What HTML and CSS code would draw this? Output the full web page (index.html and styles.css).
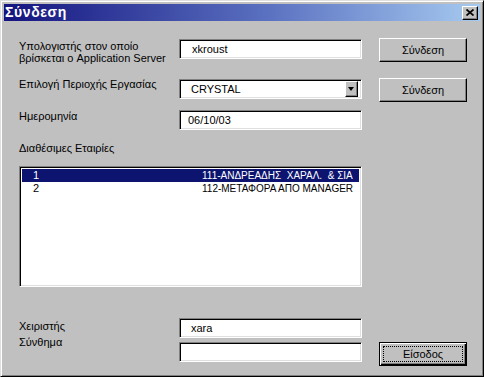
FILE: index.html
```html
<!DOCTYPE html>
<html lang="el">
<head>
    <meta charset="UTF-8">
    <meta name="viewport" content="width=device-width, initial-scale=1.0">
    <link rel="stylesheet" href="styles.css">
    <title>Σύνδεση</title>
</head>
<body>
    <div class="window">
        <div class="titlebar">
            <span class="title">Σύνδεση</span>
            <button class="close-btn">
                <svg width="8" height="7" viewBox="0 0 8 7">
                    <path d="M0.5 0.5 L7.5 6.5 M7.5 0.5 L0.5 6.5" stroke="#000" stroke-width="1.7" fill="none"/>
                </svg>
            </button>
        </div>

        <div class="content">
            <div class="form-row row-server">
                <div class="field-label">Υπολογιστής στον οποίο<br>βρίσκεται ο Application Server</div>
                <div class="textbox">xkroust</div>
                <div></div>
                <button class="btn">Σύνδεση</button>
            </div>

            <div class="form-row row-area">
                <div class="field-label">Επιλογή Περιοχής Εργασίας</div>
                <div class="textbox combo">
                    <span class="combo-text">CRYSTAL</span>
                    <span class="combo-arrow"></span>
                </div>
                <div></div>
                <button class="btn">Σύνδεση</button>
            </div>

            <div class="form-row row-date">
                <div class="field-label">Ημερομηνία</div>
                <div class="textbox date">06/10/03</div>
            </div>

            <div class="list-label">Διαθέσιμες Εταιρίες</div>
            <div class="listbox">
                <div class="list-item selected"><span class="item-num">1</span><span class="item-name">111-ΑΝΔΡΕΑΔΗΣ&nbsp; ΧΑΡΑΛ.&nbsp; &amp; ΣΙΑ</span></div>
                <div class="list-item"><span class="item-num">2</span><span class="item-name">112-ΜΕΤΑΦΟΡΑ ΑΠΟ MANAGER</span></div>
            </div>

            <div class="login">
                <div class="login-labels">
                    <div>Χειριστής</div>
                    <div>Σύνθημα</div>
                </div>
                <div class="login-inputs">
                    <div class="textbox">xara</div>
                    <div class="textbox"></div>
                </div>
                <div class="login-action">
                    <button class="btn default-btn"><span class="focus">Είσοδος</span></button>
                </div>
            </div>
        </div>
    </div>
</body>
</html>
```

FILE: styles.css
```css
body {
    margin: 0;
    padding: 0;
    font-family: "Liberation Sans", Arial, sans-serif;
    font-size: 11px;
    color: #000;
    background-color: #c0c0c0;
}

.window {
    width: 484px;
    height: 377px;
    box-sizing: border-box;
    background-color: #c0c0c0;
    border: 1px solid;
    border-color: #dfdfdf #000 #000 #dfdfdf;
    box-shadow: inset 1px 1px #fff, inset -1px -1px #808080;
    padding: 3px;
}

.titlebar {
    height: 17px;
    display: flex;
    align-items: center;
    background: linear-gradient(to right, #14147f 0%, #5a70c0 55%, #a6caf0 100%);
}

.title {
    color: #fff;
    font-weight: bold;
    font-size: 14px;
    letter-spacing: 0.6px;
    padding-left: 1px;
    line-height: 17px;
}

.close-btn {
    margin-left: auto;
    margin-right: 2px;
    width: 16px;
    height: 14px;
    padding: 0;
    display: flex;
    align-items: center;
    justify-content: center;
    background-color: #c0c0c0;
    border: 1px solid;
    border-color: #fff #000 #000 #fff;
    box-shadow: inset -1px -1px #808080;
}

.content {
    padding: 17px 0 0 15px;
}

.form-row {
    display: grid;
    grid-template-columns: 160px 183px 17px 88px;
    align-items: start;
}

.row-server {
    height: 40px;
}

.row-server .field-label {
    padding-top: 2px;
}

.row-server .textbox,
.row-area .textbox {
    margin-top: 1px;
}

.row-area {
    height: 32px;
}

.field-label {
    line-height: 12px;
}

.textbox {
    height: 20px;
    box-sizing: border-box;
    background-color: #fff;
    border: 1px solid;
    border-color: #808080 #fff #fff #808080;
    box-shadow: inset 1px 1px #000, inset -1px -1px #dfdfdf;
    padding: 1px 0 0 12px;
    line-height: 16px;
}

.combo {
    display: flex;
    align-items: center;
    padding: 1px 3px 1px 11px;
    line-height: 14px;
}

.combo-text {
    flex: 1;
}

.combo-arrow {
    width: 13px;
    height: 16px;
    box-sizing: border-box;
    background-color: #c0c0c0;
    border: 1px solid;
    border-color: #fff #000 #000 #fff;
    box-shadow: inset -1px -1px #808080;
    display: flex;
    align-items: center;
    justify-content: center;
}

.combo-arrow::after {
    content: "";
    border-left: 3px solid transparent;
    border-right: 3px solid transparent;
    border-top: 4px solid #000;
    margin-left: -1px;
}

.date {
    padding-left: 8px;
}

.btn {
    width: 88px;
    height: 24px;
    padding: 0;
    font-family: inherit;
    font-size: 11px;
    color: #000;
    background-color: #c0c0c0;
    border: 1px solid;
    border-color: #fff #000 #000 #fff;
    box-shadow: inset -1px -1px #808080;
}

.list-label {
    margin-top: 12px;
    line-height: 13px;
}

.listbox {
    margin-top: 11px;
    width: 343px;
    height: 121px;
    box-sizing: border-box;
    background-color: #fff;
    border: 1px solid;
    border-color: #808080 #fff #fff #808080;
    box-shadow: inset 1px 1px #000, inset -1px -1px #dfdfdf;
    padding: 2px;
    overflow: hidden;
}

.list-item {
    display: flex;
    height: 13px;
    line-height: 13px;
    padding-left: 11px;
    white-space: nowrap;
}

.list-item.selected {
    background-color: #0c1470;
    color: #fff;
}

.item-num {
    width: 169px;
    flex-shrink: 0;
}

.item-name {
    font-size: 10px;
}

.login {
    display: flex;
    margin-top: 31px;
}

.login-labels {
    width: 160px;
    line-height: 16px;
}

.login-inputs {
    width: 183px;
    display: flex;
    flex-direction: column;
    gap: 4px;
}

.login-inputs .textbox {
    padding-left: 11px;
}

.login-action {
    margin-left: 17px;
    padding-top: 24px;
}

.default-btn {
    border: 1px solid #000;
    box-shadow: inset 1px 1px #fff, inset -1px -1px #000, inset -2px -2px #808080;
    padding: 3px;
    display: flex;
}

.focus {
    flex: 1;
    border: 1px dotted #000;
    display: flex;
    align-items: center;
    justify-content: center;
}
```
